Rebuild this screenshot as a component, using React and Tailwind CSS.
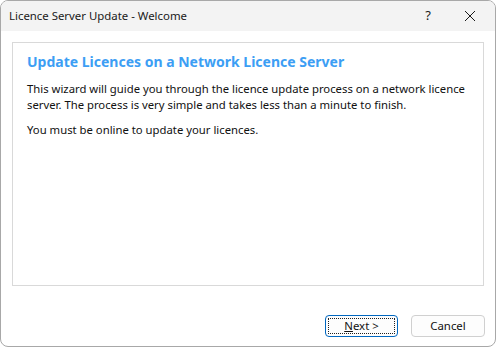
export default function App() {
  const font = { fontFamily: '"Noto Sans", "Open Sans", sans-serif' };
  return (
    <div className="w-[496px] h-[348px] bg-white" style={font}>
      <div className="w-[496px] h-[347px] border border-[#a8a8a8] rounded-t-lg rounded-b-lg overflow-hidden flex flex-col bg-white">
        <div className="h-[30px] bg-[#f3f3f3] flex items-center shrink-0">
          <div className="pl-[8px] text-[11.4px] text-[#1a1a1a] flex-1">Licence Server Update - Welcome</div>
          <div className="w-[40px] text-center text-[13px] text-[#1a1a1a] mr-[2px]">?</div>
          <div className="w-[40px] flex items-center justify-center mr-[5px]">
            <svg width="12" height="12" viewBox="0 0 12 12">
              <path d="M1 1 L11 11 M11 1 L1 11" stroke="#1a1a1a" strokeWidth="1" fill="none" />
            </svg>
          </div>
        </div>
        <div className="flex-1 flex flex-col px-[11px] pt-[11px]">
          <div className="h-[244px] border border-[#d9d9d9] pl-[14px] pr-[4px] pt-[9px]">
            <div className="text-[14px] font-bold text-[#3c9ef4] leading-[20px] whitespace-nowrap">
              Update Licences on a Network Licence Server
            </div>
            <div className="mt-[9px] text-[11.3px] leading-[16px] text-[#111] whitespace-nowrap">
              This wizard will guide you through the licence update process on a network licence
              <br />
              server. The process is very simple and takes less than a minute to finish.
            </div>
            <div className="mt-[9px] text-[11.3px] leading-[16px] text-[#111] whitespace-nowrap">
              You must be online to update your licences.
            </div>
          </div>
          <div className="flex justify-end gap-[13px] mt-[29px] mr-[-1px]">
            <button className="w-[73px] h-[22px] rounded-[4px] border border-[#0067c0] bg-[#fdfdfd] p-[2px]">
              <div className="w-full h-full border border-dotted border-[#222] flex items-center justify-center text-[11.4px] text-[#111]">
                <span><span className="underline">N</span>ext &gt;</span>
              </div>
            </button>
            <button className="w-[74px] h-[22px] rounded-[4px] border border-[#d0d0d0] bg-[#fdfdfd] flex items-center justify-center text-[11.4px] text-[#111]">
              Cancel
            </button>
          </div>
        </div>
      </div>
    </div>
  );
}
